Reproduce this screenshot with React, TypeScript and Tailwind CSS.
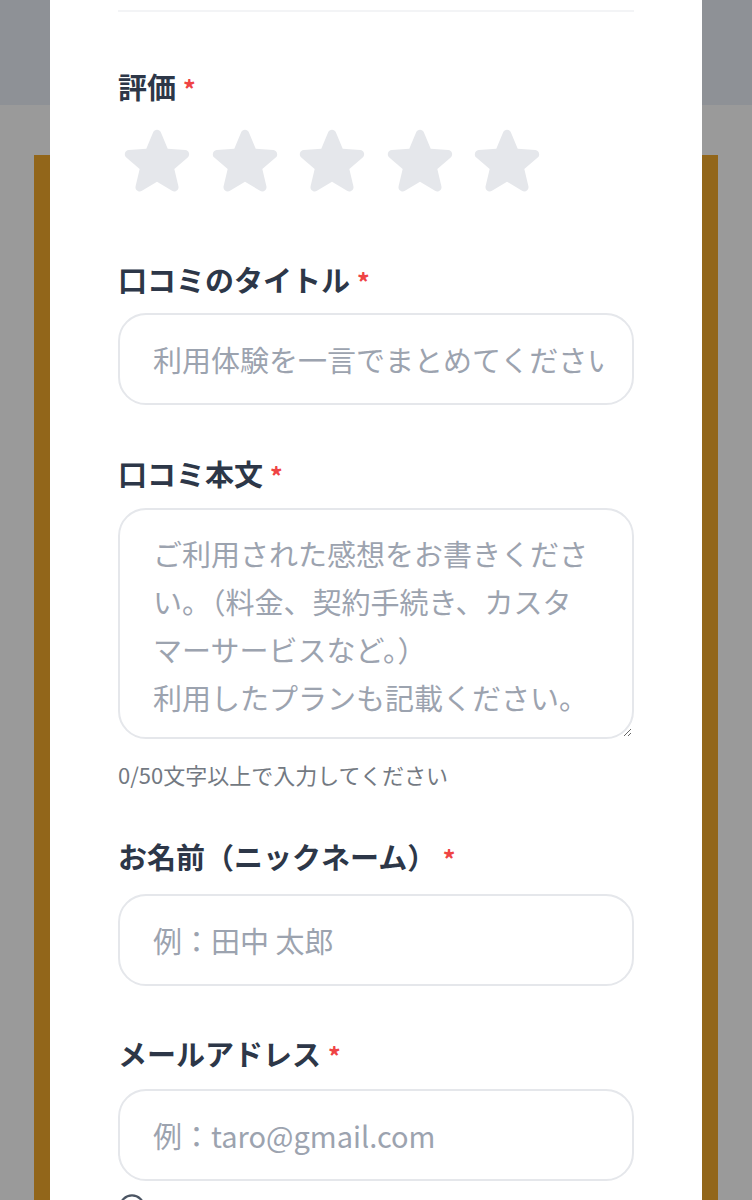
import { Info } from "lucide-react";

const font = { fontFamily: '"Noto Sans CJK JP", "Noto Sans", sans-serif' };

const Star = () => (
  <svg viewBox="0 0 24 24" className="w-[78px] h-[78px] fill-[#e5e7eb]">
    <path
      fillRule="evenodd"
      d="M10.788 3.21c.448-1.077 1.976-1.077 2.424 0l2.082 5.006 5.404.434c1.164.093 1.636 1.545.749 2.305l-4.117 3.527 1.257 5.273c.271 1.136-.964 2.033-1.96 1.425L12 18.354 7.373 21.18c-.996.608-2.231-.29-1.96-1.425l1.257-5.273-4.117-3.527c-.887-.76-.415-2.212.749-2.305l5.404-.434 2.082-5.005Z"
    />
  </svg>
);

const Label = ({ text, wide }: { text: string; wide?: boolean }) => (
  <label className="block h-[40px] text-[29px] leading-[40px] font-bold text-[#2d3748]">
    {text}
    <span className={`text-[25px] leading-none text-[#ef4444] ${wide ? "ml-0" : "ml-[7px]"}`}>*</span>
  </label>
);

const inputCls =
  "block w-full h-[92px] rounded-[28px] border-2 border-[#e5e7eb] bg-white pl-[33px] pr-[28px] text-[29px] text-[#2d3748] outline-none placeholder:text-[#9ca3af]";

const App = () => {
  return (
    <div className="relative h-[1200px] w-[752px] overflow-hidden" style={font}>
      {/* page behind the overlay */}
      <div className="flex h-full flex-col">
        <div className="h-[105px] bg-[#8e9196]" />
        <div className="flex-1 bg-[#9a9a9a] px-[34px] pt-[50px]">
          <div className="h-full bg-[#92661a]" />
        </div>
      </div>

      {/* modal */}
      <div className="absolute left-[50px] right-[50px] top-0 bottom-0 bg-white px-[68px]">
        <div className="mt-[10px] border-t-2 border-[#f3f4f6]" />

        <div className="mt-[54px]">
          <Label text="評価" />
          <div className="mt-[16px] flex h-[78px] gap-[9.5px]">
            {[1, 2, 3, 4, 5].map((n) => (
              <Star key={n} />
            ))}
          </div>
        </div>

        <div className="mt-[59px]">
          <Label text="口コミのタイトル" />
          <input className={`mt-[14px] ${inputCls}`} placeholder="利用体験を一言でまとめてください" />
        </div>

        <div className="mt-[48px]">
          <Label text="口コミ本文" />
          <textarea
            className="mt-[15px] block h-[231px] w-full rounded-[28px] border-2 border-[#e5e7eb] bg-white px-[33px] pt-[19px] text-[29px] leading-[48px] text-[#2d3748] outline-none placeholder:text-[#9ca3af]"
            placeholder={"ご利用された感想をお書きください。（料金、契約手続き、カスタマーサービスなど。）\n利用したプランも記載ください。"}
          />
          <p className="mt-[19px] h-[32px] text-[22px] leading-[32px] text-[#737982]">0/50文字以上で入力してください</p>
        </div>

        <div className="mt-[46px]">
          <Label text="お名前（ニックネーム） " wide />
          <input className={`mt-[18px] ${inputCls}`} placeholder="例：田中 太郎" />
        </div>

        <div className="mt-[47px]">
          <Label text="メールアドレス" />
          <input className={`mt-[16px] ${inputCls}`} placeholder="例：taro@gmail.com" />
        </div>

        <div className="mt-[12px] flex items-start gap-2 text-[22px] leading-[32px] text-[#6b7280]">
          <Info className="h-[28px] w-[28px] text-[#4b5563]" strokeWidth={2} />
          <span>メールアドレスは公開されません</span>
        </div>
      </div>
    </div>
  );
};

export default App;
